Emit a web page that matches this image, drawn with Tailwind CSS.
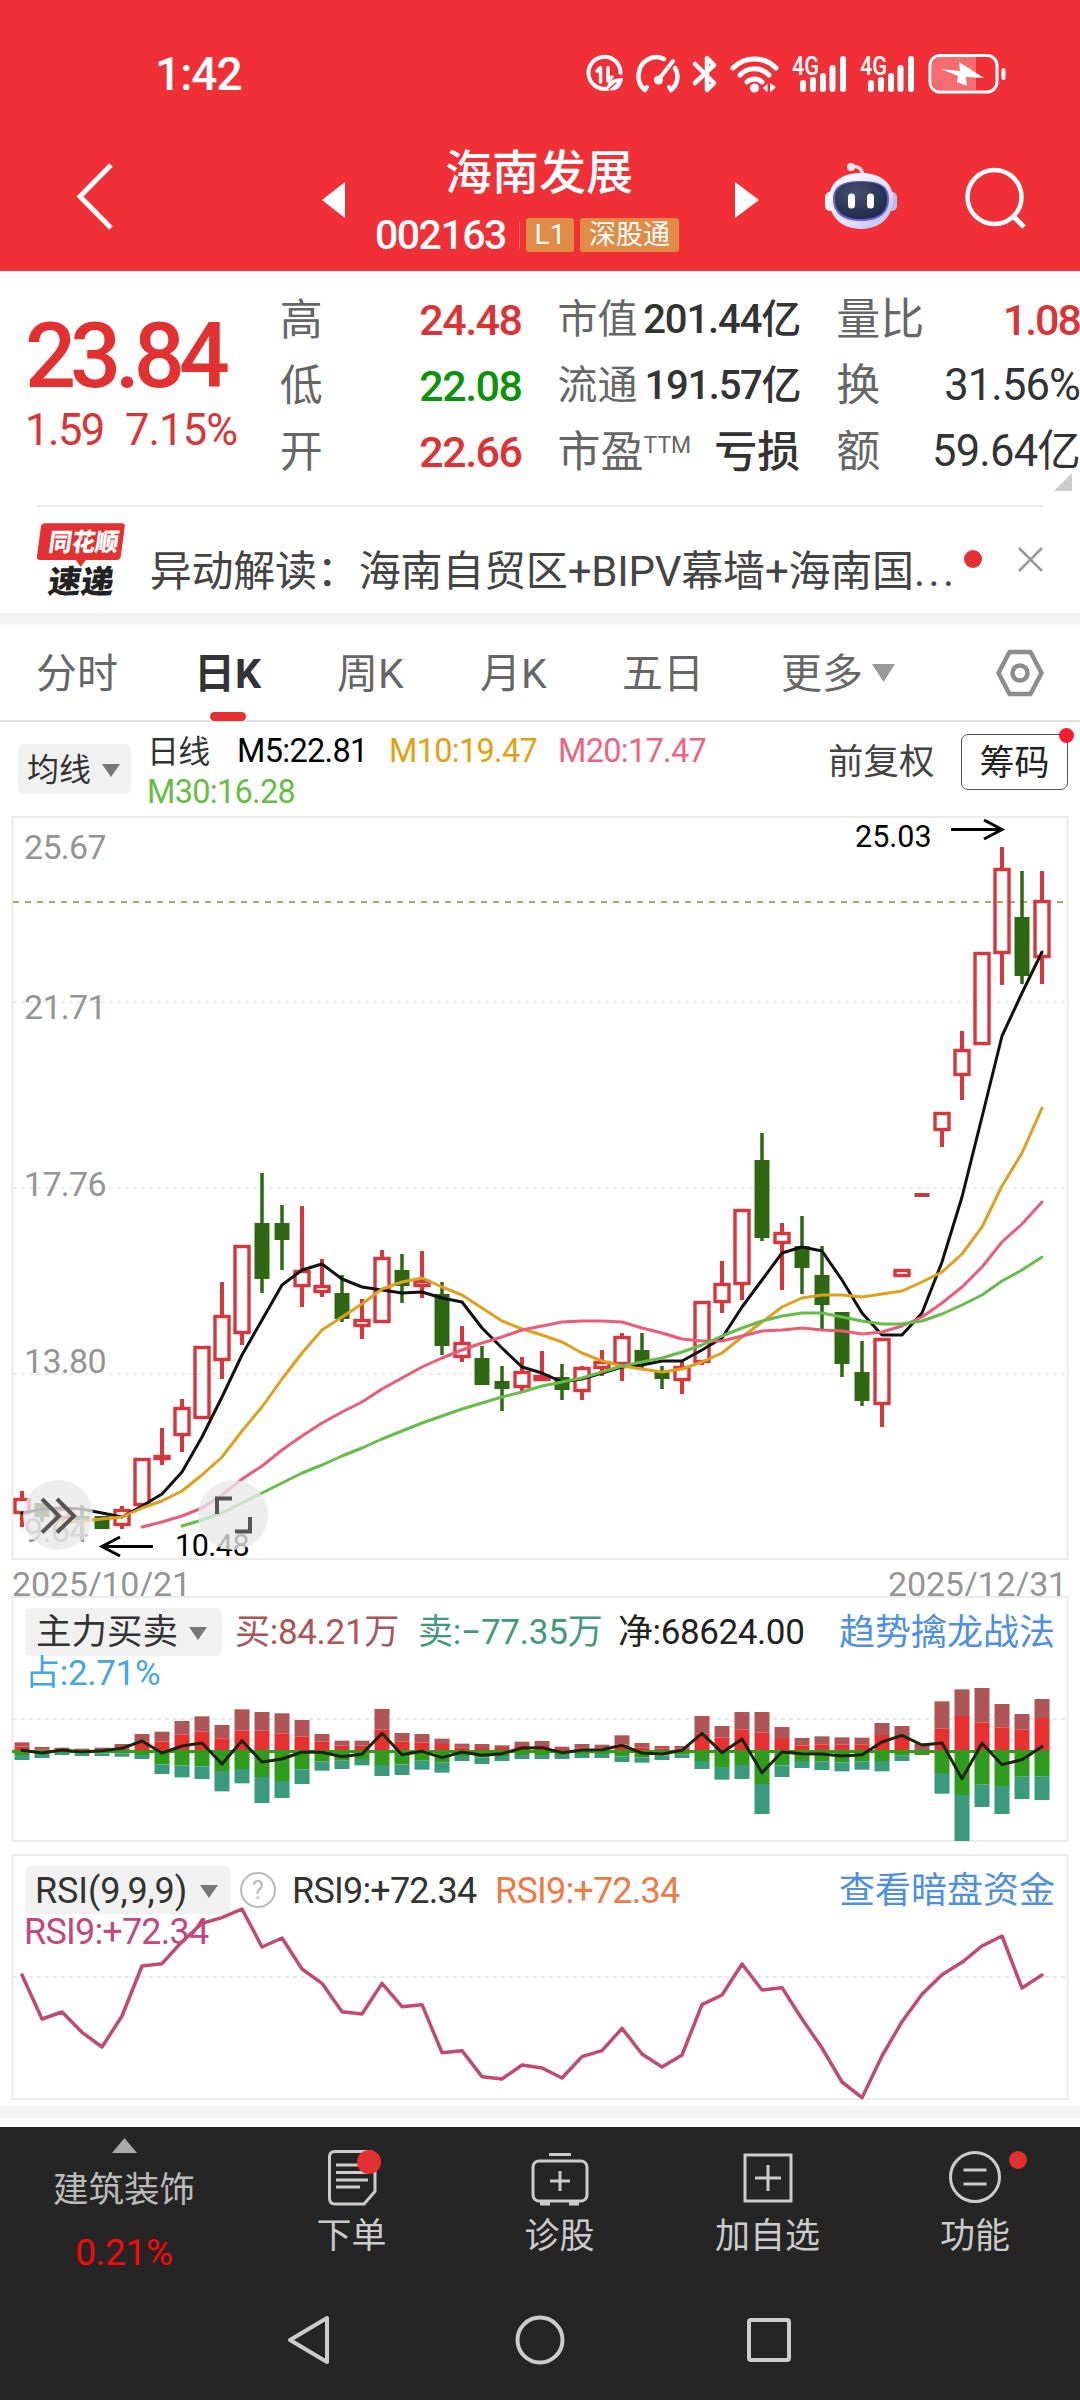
<!DOCTYPE html>
<html lang="zh-CN">
<head>
<meta charset="utf-8">
<title>海南发展 002163</title>
<script src="https://cdn.jsdelivr.net/npm/@tailwindcss/browser@4"></script>
</head>
<body class="bg-white">
<div class="relative flex h-[2400px] w-[1080px] flex-col overflow-hidden bg-white font-['Roboto','Noto_Sans_CJK_SC',sans-serif] leading-none whitespace-nowrap text-[#333]">

  <!-- header -->
  <header class="h-[271px] shrink-0 bg-[#f12f37] text-white">
    <div class="flex h-[145px] items-center pt-[2px] pl-[155px]">
      <div class="w-[429px] text-[46px] font-medium tracking-[-1px]">1:42</div>
      <svg width="424" height="44" viewBox="584 51 424 44" fill="none" stroke="#fff" stroke-width="4" stroke-linecap="round" stroke-linejoin="round">
        <path d="M611 86.500A16 16 0 1 1 620.500 72"/>
        <path d="M597 70l3.500-3.500V81M608 66.500V80l4-4" stroke-width="3.500"/>
        <path d="M607 90c-1-8 4-13 16-13-1 9-6 14-14 12z" fill="#fff" stroke="none"/><path d="M609 88l7-6" stroke="#f12f37" stroke-width="1.500"/>
        <path d="M645 89a17 17 0 0 1-6-18A17.500 17.500 0 0 1 664 58M675 67a17 17 0 0 1-4 22" stroke-width="4.500"/>
        <path d="M645 89l2-3M671 89l-2-3M673 60L659 78"/><circle cx="658.500" cy="79" r="4.500" fill="#fff" stroke="none"/>
        <path d="M695 63l19 19-7 7V57l7 7-19 18" stroke-width="4.500"/>
        <path d="M733 67a30 30 0 0 1 43 0M740 74a20 20 0 0 1 29 0M747 81a11 11 0 0 1 15 0" stroke-width="5"/><circle cx="754.500" cy="87" r="4.500" fill="#fff" stroke="none"/>
        <path d="M763 87l4.500-4.500v9zM770 82v9.500l6-5.500z" fill="#fff" stroke="none"/>
        <g stroke-width="6"><path d="M803 82v6M813 79v9M823 75v13M832.500 67v21M843 58v30"/><path d="M871 82v6M881 79v9M891 75v13M900.500 67v21M911 58v30"/></g>
        <g fill="#fff" stroke="none" font-family="Roboto" font-weight="500" font-size="25"><text x="792" y="74" textLength="27" lengthAdjust="spacingAndGlyphs">4G</text><text x="860" y="74" textLength="27" lengthAdjust="spacingAndGlyphs">4G</text></g>
        <rect x="930" y="54.500" width="67" height="36.500" rx="10" stroke-width="3"/>
        <path d="M976 56h-36a9 9 0 0 0-8 8v17a9 9 0 0 0 8 8h36z" fill="#f7868a" fill-opacity=".7" stroke="none"/>
        <path d="M959 61l25 16-18-1 1 9-10-4 1-6-17-7 19 2z" fill="#fff" stroke="none"/>
        <path d="M1003.500 69v8" stroke-width="4"/>
      </svg>
    </div>
    <div class="flex h-[110px] items-start">
      <svg class="mt-[17px] ml-[72px]" width="44" height="70" viewBox="0 0 44 70" fill="none" stroke="#fff" stroke-width="5"><path d="M39 3L8 34.500 39 66"/></svg>
      <svg class="mt-[37px] ml-[206px]" width="23" height="36" viewBox="0 0 23 36"><path d="M23 0v36L0 18z" fill="#fff"/></svg>
      <div class="w-[390px]">
        <div class="h-[73px] pt-[4px] pr-[2px] text-center text-[47px] font-medium">海南发展</div>
        <div class="flex h-[34px] items-center pl-[30px]">
          <span class="w-[144px] text-[41px] font-medium tracking-[-1.500px]">002163</span>
          <span class="mr-[6px] h-[28px] w-px bg-[#e8703f]"></span>
          <span class="flex h-[34px] w-[48px] items-center justify-center rounded-[3px] bg-[#e08c46] text-[28px]">L1</span>
          <span class="ml-[6px] flex h-[34px] w-[99px] items-center justify-center rounded-[3px] bg-[#e08c46] text-[27px]">深股通</span>
        </div>
      </div>
      <svg class="mt-[37px]" width="24" height="36" viewBox="0 0 24 36"><path d="M0 0v36l24-18z" fill="#fff"/></svg>
      <svg class="mt-[17px] ml-[65px]" width="74" height="68" viewBox="824 162 74 68">
        <defs><linearGradient id="shell" x1="0" y1="0" x2="1" y2="1"><stop offset="0" stop-color="#fff"/><stop offset=".55" stop-color="#e4e4fb"/><stop offset="1" stop-color="#b9b8f2"/></linearGradient>
        <radialGradient id="visor" cx=".4" cy=".3" r=".8"><stop offset="0" stop-color="#45516e"/><stop offset="1" stop-color="#1b2647"/></radialGradient></defs>
        <path d="M862 175c1-6-4-9-10-9" fill="none" stroke="#f3dff0" stroke-width="3.500"/><circle cx="851" cy="167" r="4" fill="#fbe6ee"/>
        <rect x="825" y="192" width="14" height="19" rx="5" fill="#f0effd"/><rect x="883" y="192" width="14" height="19" rx="5" fill="#bcbcf3"/>
        <path d="M861 173c20 0 32 10 32 26s-11 30-32 30-32-14-32-30 12-26 32-26z" fill="url(#shell)"/>
        <path d="M861 181c19 0 28 5 28 18s-8 22-28 22-28-9-28-22 9-18 28-18z" fill="#6a5be0"/>
        <path d="M861 182c18 0 26 4 26 17s-8 20-26 20-26-8-26-20 8-17 26-17z" fill="url(#visor)"/>
        <path d="M851.500 197v8M870.500 197v8" stroke="#fff" stroke-width="7" stroke-linecap="round"/>
      </svg>
      <svg class="mt-[21px] ml-[66px]" width="66" height="66" viewBox="964 166 66 66" fill="none" stroke="#fff" stroke-width="4.500"><circle cx="994.500" cy="197" r="27"/><path d="M1013 216l11 11" stroke-width="5"/></svg>
    </div>
  </header>

  <!-- quote -->
  <section class="relative flex h-[234px] shrink-0 pt-[16px]">
    <div class="w-[280px] pl-[25px]">
      <div class="mt-[25px] h-[89px] text-[90px] font-medium tracking-[-6.200px] text-[#e33031]">23.84</div>
      <div class="mt-[8px] flex text-[43.500px] tracking-[-0.900px] text-[#dc3436]"><span class="w-[100px] tracking-[-1.500px]">1.59</span><span>7.15%</span></div>
    </div>
    <div class="flex w-[242px] flex-col text-[43px] text-[#666]">
      <div class="flex h-[66px] items-center justify-between">高<span class="font-medium tracking-[-1.500px] text-[#dc3436]">24.48</span></div>
      <div class="flex h-[66px] items-center justify-between">低<span class="font-medium tracking-[-1.500px] text-[#0b940b]">22.08</span></div>
      <div class="flex h-[66px] items-center justify-between">开<span class="font-medium tracking-[-1.500px] text-[#dc3436]">22.66</span></div>
    </div>
    <div class="ml-[36px] flex w-[243px] flex-col text-[40px] text-[#666]">
      <div class="flex h-[66px] items-center justify-between">市值<span class="font-medium tracking-[-1.100px] text-[#333]">201.44亿</span></div>
      <div class="flex h-[66px] items-center justify-between">流通<span class="font-medium tracking-[-1.300px] text-[#333]">191.57亿</span></div>
      <div class="flex h-[66px] items-center justify-between text-[43px]"><span class="flex">市盈<span class="pt-[3px] text-[23px]">TTM</span></span><span class="font-medium text-[#333]">亏损</span></div>
    </div>
    <div class="ml-[36px] flex w-[244px] flex-col text-[44px] text-[#666]">
      <div class="flex h-[66px] items-center justify-between">量比<span class="text-[43px] font-medium tracking-[-2px] text-[#dc3436]">1.08</span></div>
      <div class="flex h-[66px] items-center justify-between">换<span class="text-[43.500px] tracking-[-0.900px] text-[#333]">31.56%</span></div>
      <div class="flex h-[66px] items-center justify-between">额<span class="text-[43.500px] tracking-[-0.800px] text-[#333]">59.64亿</span></div>
    </div>
    <svg class="absolute top-[202px] left-[1054px]" width="18" height="18"><path d="M18 0v18H0z" fill="#ccc"/></svg>
  </section>

  <!-- news -->
  <section class="mx-[37px] flex h-[108px] shrink-0 border-t-2 border-[#eee]">
    <svg class="mt-[15px]" width="90" height="76" viewBox="0 0 90 76" font-family="Noto Sans CJK SC" font-weight="900">
      <path d="M8 1h77q4 0 3 4l-4 30q-1 3-4 3H49l-5 7-5-7H3q-4 0-3-4L4 4q1-3 4-3z" fill="#e33031"/>
      <text x="15" y="29" font-size="25" fill="#fff" textLength="70" lengthAdjust="spacingAndGlyphs" transform="skewX(-8)">同花顺</text>
      <text x="20" y="71" font-size="32" fill="#222" textLength="66" lengthAdjust="spacingAndGlyphs" transform="skewX(-8)">速递</text>
    </svg>
    <div class="mt-[44px] ml-[23px] w-[818px] text-[42px] tracking-[-0.200px] text-[#444]">异动解读：海南自贸区+BIPV幕墙+海南国<span class="tracking-[3.500px]">...</span></div>
    <span class="mt-[43px] h-[18px] w-[18px] rounded-full bg-[#e33031]"></span>
    <svg class="mt-[40px] ml-[36px]" width="25" height="25" stroke="#999" stroke-width="2.500"><path d="M1 1l23 23M24 1L1 24"/></svg>
  </section>
  <div class="h-[12px] shrink-0 bg-[#f3f3f3]"></div>

  <!-- period tabs -->
  <nav class="relative flex h-[97px] shrink-0 items-center border-b-2 border-[#dfdfdf] pl-[36px] text-[41px] text-[#666]">
    <span class="w-[158px] pt-[3px]">分时</span>
    <span class="w-[143px] pt-[3px] font-bold text-[#333]">日K</span>
    <span class="w-[143px] pt-[3px]">周K</span>
    <span class="w-[142px] pt-[3px]">月K</span>
    <span class="w-[159px] pt-[3px]">五日</span>
    <span class="w-[91px] pt-[3px]">更多</span>
    <svg class="w-[124px]" width="124" height="19" viewBox="0 0 124 19"><path d="M0 1h23L11.500 19z" fill="#999"/></svg>
    <svg width="48" height="48" viewBox="0 0 48 48" fill="none" stroke="#8d8d8d" stroke-width="4.500" stroke-linejoin="round"><path d="M13.500 3h21L45.500 24l-11 21h-21L2.500 24z"/><circle cx="24" cy="24" r="7.500"/></svg>
    <span class="absolute top-[87px] left-[210px] h-[9px] w-[36px] rounded-full bg-[#e33031]"></span>
  </nav>

  <!-- moving averages -->
  <section class="flex h-[94px] shrink-0">
    <div class="mt-[22px] ml-[18px] flex h-[50px] w-[113px] items-center justify-between rounded-[6px] bg-[#f1f1f1] pt-[2px] pr-[11px] pl-[9px] text-[32px]">均线<svg width="18" height="13"><path d="M0 0h18L9 13z" fill="#777"/></svg></div>
    <div class="ml-[16px] grid w-[681px] auto-rows-[41px] content-start items-center pt-[9px] text-[32.500px] tracking-[-0.700px]">
      <div class="flex items-center"><span class="w-[90px] text-[32px]">日线</span><span class="w-[152px] text-black">M5:22.81</span><span class="w-[169px] text-[#e3a012]">M10:19.47</span><span class="text-[#ee6480]">M20:17.47</span></div>
      <div class="text-[#68bd45]">M30:16.28</div>
    </div>
    <div class="mt-[23px] w-[133px] text-[35.500px] text-[#444]">前复权</div>
    <div class="relative mt-[12px] flex h-[56px] w-[107px] items-center justify-center rounded-[7px] border-[1.500px] border-[#555] pt-[2px] text-[35px] text-[#222]">筹码<span class="absolute -top-[7px] -right-[7px] h-[15px] w-[15px] rounded-full bg-[#f8202f]"></span></div>
  </section>

  <!-- candles -->
  <section class="relative h-[744px] shrink-0">
    <svg id="kline" class="block" width="1080" height="744" viewBox="0 816 1080 744" fill="none">
      <rect x="12.500" y="817" width="1055" height="742" stroke="#ebebeb" stroke-width="2"/>
      <path d="M13 1002H1066M13 1188H1066M13 1374H1066" stroke="#ececec" stroke-width="2" stroke-dasharray="4 4"/>
      <path d="M13 902H1066" stroke="#b9a268" stroke-width="2" stroke-dasharray="6 6"/>
    </svg>
    <div class="absolute top-[14px] left-[24px] text-[34px] tracking-[-0.700px] text-[#959595]">25.67</div>
    <div class="absolute top-[174px] left-[24px] text-[34px] tracking-[-0.700px] text-[#959595]">21.71</div>
    <div class="absolute top-[351px] left-[24px] text-[34px] tracking-[-0.700px] text-[#959595]">17.76</div>
    <div class="absolute top-[528px] left-[24px] text-[34px] tracking-[-0.700px] text-[#959595]">13.80</div>
    <div class="absolute top-[697px] left-[24px] text-[34px] tracking-[-0.700px] text-[#959595]">9.64</div>
    <div class="absolute top-[6px] left-[855px] text-[30.500px] text-black">25.03</div>
    <div class="absolute top-[715px] left-[175px] text-[30.500px] tracking-[-0.500px] text-black">10.48</div>
    <svg class="absolute inset-0" width="1080" height="744" viewBox="0 816 1080 744" fill="none">
      <path d="M951 829.500H1001M984 820l18 9.500-18 9.500M153 1546.500H103M120 1537l-18 9.500 18 9.500" stroke="#000" stroke-width="3"/>
      <circle cx="58" cy="1515" r="35" fill="#e8e8e8" fill-opacity=".78"/><circle cx="233" cy="1515" r="35" fill="#e8e8e8" fill-opacity=".78"/>
      <path d="M42 1499l17 17-17 16.500M57 1499l17 17-17 16.500" stroke="#555" stroke-width="4"/>
      <path d="M217 1514v-15.500h15M250 1517v14.500h-15" stroke="#555" stroke-width="4"/>
    </svg>
  </section>
  <div class="flex h-[36px] shrink-0 items-start justify-between pt-[7px] pr-[13px] pl-[12px] text-[34px] tracking-[-0.200px] text-[#959595]"><span>2025/10/21</span><span>2025/12/31</span></div>

  <!-- buy / sell force -->
  <section class="relative h-[246px] shrink-0">
    <svg id="force" class="absolute inset-0" width="1080" height="246" viewBox="0 1596 1080 246" fill="none">
      <rect x="12.500" y="1597" width="1055" height="244" stroke="#ebebeb" stroke-width="2"/>
      <path d="M13 1719H1066" stroke="#e8e8e8" stroke-width="2" stroke-dasharray="4 4"/>
    </svg>
    <div class="relative flex items-center pt-[12px] pl-[25px] text-[35px]">
      <div class="flex h-[48px] w-[197px] items-center justify-between rounded-[6px] bg-[#f1f1f1] pt-[2px] pr-[15px] pl-[11px] text-[35.500px]">主力买卖<svg width="18" height="13"><path d="M0 0h18L9 13z" fill="#777"/></svg></div>
      <span class="ml-[13px] w-[183px] pt-px tracking-[-0.300px] text-[#aa5556]">买:84.21万</span>
      <span class="w-[200px] pt-px tracking-[-0.200px] text-[#3f9a7c]">卖:−77.35万</span>
      <span class="w-[221px] pt-px tracking-[-0.400px] text-[#222]">净:68624.00</span>
      <span class="pt-px text-[36px] text-[#4f8fe0]">趋势擒龙战法</span>
    </div>
    <div class="relative pl-[25px] text-[35px] leading-[36px] tracking-[-0.300px] text-[#45a6e6]">占:2.71%</div>
  </section>

  <!-- RSI -->
  <section class="relative mt-[12px] h-[246px] shrink-0">
    <div class="flex items-center pt-[12px] pl-[25px] text-[36px]">
      <div class="flex h-[48px] w-[206px] items-center justify-between rounded-[6px] bg-[#f1f1f1] pt-[2px] pr-[13px] pl-[10px] tracking-[-0.100px]">RSI(9,9,9)<svg width="18" height="13"><path d="M0 0h18L9 13z" fill="#777"/></svg></div>
      <span class="ml-[9px] flex h-[36px] w-[36px] items-center justify-center rounded-full border-2 border-[#bbb] text-[25px] text-[#bbb]">?</span>
      <span class="ml-[16px] w-[203px] pt-px tracking-[-0.800px]">RSI9:+72.34</span>
      <span class="w-[344px] pt-px tracking-[-0.800px] text-[#ee7a45]">RSI9:+72.34</span>
      <span class="pt-px text-[36px] text-[#4f8fe0]">查看暗盘资金</span>
    </div>
    <div class="pl-[24px] text-[36px] leading-[36px] tracking-[-0.800px] text-[#c0487e]">RSI9:+72.34</div>
    <svg id="rsi" class="absolute inset-0" width="1080" height="246" viewBox="0 1854 1080 246" fill="none">
      <rect x="12.500" y="1855" width="1055" height="244" stroke="#ebebeb" stroke-width="2"/>
      <path d="M13 1977H1066" stroke="#e8e8e8" stroke-width="2" stroke-dasharray="4 4"/>
    </svg>
  </section>
  <div class="mt-[6px] mb-[9px] h-[12px] shrink-0 bg-[#f4f4f4]"></div>

  <!-- bottom bar -->
  <footer class="h-[273px] shrink-0 bg-[#252525] text-[#ccc]">
    <div class="flex h-[161px] text-[35px]">
      <div class="flex w-[248px] flex-col items-center pt-[11px]">
        <svg width="25" height="15"><path d="M12.500 0L25 15H0z" fill="#aaa"/></svg>
        <span class="mt-[20px] text-[35.500px] text-[#bbb]">建筑装饰</span>
        <span class="mt-[25px] text-[37px] tracking-[-0.300px] text-[#f50a0a]">0.21%</span>
      </div>
      <div class="flex w-[207px] flex-col items-center pt-[22px]">
        <svg width="60" height="58" viewBox="-6 0 60 58" fill="none" stroke="#ccc" stroke-width="3"><path d="M7 2.500h34q6 0 6 6v34L36 55H7q-5.500 0-5.500-6V8q0-5.500 5.500-5.500z"/><path d="M8 16h28M8 23.500h32M8 31h32M8 38h24"/><circle cx="41" cy="13" r="12" fill="#e33031" stroke="none"/></svg>
        <span class="mt-[12px]">下单</span>
      </div>
      <div class="flex w-[209px] flex-col items-center pt-[22px]">
        <svg width="58" height="58" viewBox="0 0 58 58" fill="none" stroke="#ccc" stroke-width="3"><rect x="2" y="12" width="54" height="40" rx="6"/><path d="M18 5.500h22M29 22v20M19 32h20"/><path d="M9 54.500h10M38 54.500h10" stroke-width="4"/></svg>
        <span class="mt-[12px]">诊股</span>
      </div>
      <div class="flex w-[207px] flex-col items-center pt-[22px]">
        <svg width="50" height="58" viewBox="0 0 50 58" fill="none" stroke="#ccc" stroke-width="3"><rect x="2" y="6" width="46" height="46"/><path d="M25 16v26M12 29h26"/></svg>
        <span class="mt-[12px]">加自选</span>
      </div>
      <div class="relative flex w-[208px] flex-col items-center pt-[22px]">
        <svg width="52" height="58" viewBox="0 0 52 58" fill="none" stroke="#ccc" stroke-width="3"><circle cx="26" cy="28" r="24.500"/><path d="M14.500 21h23M14.500 35h23"/></svg>
        <span class="mt-[12px]">功能</span>
        <span class="absolute top-[24px] left-[138px] h-[18px] w-[18px] rounded-full bg-[#e33031]"></span>
      </div>
    </div>
    <svg class="block" width="1080" height="112" viewBox="0 2288 1080 112" fill="none" stroke="#ccc" stroke-width="4" stroke-linejoin="round">
      <path d="M327 2318v44L290 2340z"/><circle cx="540" cy="2340" r="22.500"/><rect x="749" y="2320" width="40" height="40" rx="2"/>
    </svg>
  </footer>
</div>

<script>
const X = i => 22 + 20 * i;
const svg = id => document.getElementById(id);
const add = (id, s) => svg(id).insertAdjacentHTML('beforeend', s);
const line = (id, ys, start, color, w) =>
  add(id, `<polyline points="${ys.map((y, i) => X(i + start) + ',' + y).join(' ')}" stroke="${color}" stroke-width="${w}" stroke-linejoin="round" stroke-linecap="round"/>`);

// direction, high, body top, body bottom, low
const candles = `R 1491 1498 1514 1527|G 1503 1503 1517 1522|R 1505 1508 1519 1521|G 1505 1516 1522 1541|G 1516 1516 1529 1529|R 1506 1509 1526 1529|R 1458 1458 1506 1506|R 1428 1455 1460 1465|R 1399 1407 1436 1452|R 1346 1346 1419 1419|R 1282 1315 1361 1379|R 1245 1245 1334 1345|G 1173 1223 1279 1293|G 1205 1223 1240 1270|R 1206 1270 1287 1307|R 1259 1285 1293 1297|G 1275 1293 1319 1322|R 1299 1319 1327 1339|R 1250 1257 1323 1323|G 1254 1270 1286 1303|R 1251 1280 1287 1298|G 1282 1294 1346 1355|R 1326 1342 1358 1362|G 1346 1358 1385 1385|G 1366 1381 1389 1411|R 1357 1371 1388 1391|R 1351 1375 1381 1381|G 1364 1377 1390 1400|R 1366 1367 1392 1400|R 1350 1361 1369 1376|R 1333 1336 1365 1381|G 1333 1350 1365 1370|G 1366 1371 1379 1389|R 1361 1366 1381 1394|R 1301 1301 1363 1365|R 1261 1283 1303 1313|R 1209 1209 1285 1300|G 1133 1160 1238 1241|R 1223 1232 1244 1290|G 1216 1246 1268 1294|G 1246 1275 1305 1329|G 1312 1312 1364 1377|G 1341 1372 1401 1406|R 1338 1338 1405 1427|R 1269 1269 1277 1277|F 1193 1193 1197 1197|R 1112 1112 1131 1147|R 1031 1049 1076 1100|R 952 952 1045 1045|R 847 868 954 985|G 871 917 976 984|R 871 900 958 984`;
let s = '';
candles.split('|').forEach((c, i) => {
  const [d, ...v] = c.split(' '), [h, t, b, l] = v.map(Number), x = X(i);
  if (d === 'F') s += `<rect x="${x - 7.5}" y="${t}" width="15" height="4" fill="#c03c3c"/>`;
  else if (d === 'G') s += `<path d="M${x} ${h}V${l}" stroke="#2e6812" stroke-width="3.500"/><rect x="${x - 7.5}" y="${t}" width="15" height="${b - t}" fill="#2e6812"/>`;
  else s += `<path d="M${x} ${h}V${t}M${x} ${b}V${l}" stroke="#d8363c" stroke-width="4"/><rect x="${x - 7}" y="${t + 1.5}" width="14" height="${Math.max(b - t - 3, 1)}" stroke="#d8363c" stroke-width="3.400"/>`;
});
add('kline', s);
line('kline', [1513,1509,1508,1509,1513,1517,1506,1494,1472,1437,1397,1355,1320,1285,1270,1264,1279,1287,1290,1293,1292,1298,1302,1328,1348,1367,1373,1382,1379,1373,1367,1365,1361,1361,1350,1338,1307,1280,1253,1247,1251,1280,1313,1335,1335,1313,1262,1197,1117,1036,993,952], 0, '#111', 3);
line('kline', [1523,1521,1519,1517,1508,1501,1491,1475,1457,1431,1407,1379,1353,1330,1317,1304,1289,1282,1278,1287,1295,1308,1321,1329,1335,1342,1353,1361,1366,1369,1372,1369,1362,1353,1337,1322,1307,1298,1295,1295,1297,1294,1291,1282,1272,1254,1227,1186,1153,1108], 2, '#dfa01c', 3);
line('kline', [1527,1522,1516,1508,1495,1479,1466,1450,1436,1423,1412,1402,1389,1378,1367,1358,1350,1343,1337,1330,1326,1322,1321,1321,1322,1328,1333,1339,1341,1341,1336,1331,1330,1328,1330,1331,1334,1332,1326,1317,1303,1287,1267,1242,1224,1202], 6, '#ea5c78', 3);
line('kline', [1526,1520,1513,1503,1493,1483,1473,1465,1456,1448,1439,1431,1423,1416,1409,1403,1397,1392,1386,1382,1378,1372,1366,1362,1358,1352,1345,1336,1328,1321,1316,1313,1313,1317,1321,1324,1324,1321,1314,1305,1295,1281,1270,1257], 8, '#66bd4a', 3);

// stacked bars: outer top, inner top, inner bottom, outer bottom (thirds of a pixel below 1640)
const bars = [[307,320,345,360],[321,328,342,354],[323,330,338,345],[326,330,340,348],[323,330,340,348],[312,325,340,350],[282,305,345,357],[275,305,373,402],[243,283,376,412],[229,274,379,417],[255,295,393,454],[208,272,387,430],[216,272,411,489],[220,280,423,474],[240,289,388,432],[282,304,365,392],[302,317,362,387],[302,317,357,376],[207,268,375,408],[279,305,373,405],[282,308,362,389],[296,312,368,398],[311,322,348,363],[312,324,352,372],[316,324,348,363],[305,318,345,357],[303,318,345,357],[320,327,345,357],[312,325,342,354],[314,325,342,354],[286,314,349,366],[309,322,352,368],[318,325,346,360],[318,325,344,354],[228,280,363,387],[258,293,381,419],[216,268,375,417],[216,278,432,522],[261,297,376,411],[294,316,363,384],[289,313,364,390],[292,313,367,394],[293,313,364,389],[249,285,363,394],[258,290,347,363],[310,330,345,345],[184,265,399,461],[148,228,465,603],[144,247,434,501],[192,262,438,522],[222,268,410,477],[177,234,410,480]];
s = '<rect x="12" y="1750" width="1030" height="3" fill="#2f9a1c"/>';
bars.forEach(([a, b, c, d], i) => {
  const r = (t, e, f) => `<rect x="${X(i) - 7.5}" y="${1640 + t / 3}" width="15" height="${(e - t) / 3}" fill="${f}"/>`;
  s += r(a, b, '#b05555') + r(b, 332, '#e93030') + r(330, c, '#2f9c1c') + r(c, d, '#3a9a7c');
});
add('force', s);
line('force', [331,339,330,336,332,325,303,339,318,309,372,302,366,357,336,337,350,342,280,344,334,353,336,346,341,324,323,338,330,329,316,339,342,331,280,338,297,398,336,341,342,348,344,306,286,315,309,416,310,374,359,320].map(v => 1640 + v / 3), 0, '#1c2410', 3);
line('rsi', [405,537,516,577,621,528,378,371,305,250,233,207,321,294,387,430,515,522,430,500,494,638,632,710,717,675,684,714,650,632,565,642,681,645,494,465,372,450,443,537,624,726,773,648,545,463,404,367,318,288,444,405].map(v => 1840 + v / 3), 0, '#c24a72', 3.5);
</script>
</body>
</html>
